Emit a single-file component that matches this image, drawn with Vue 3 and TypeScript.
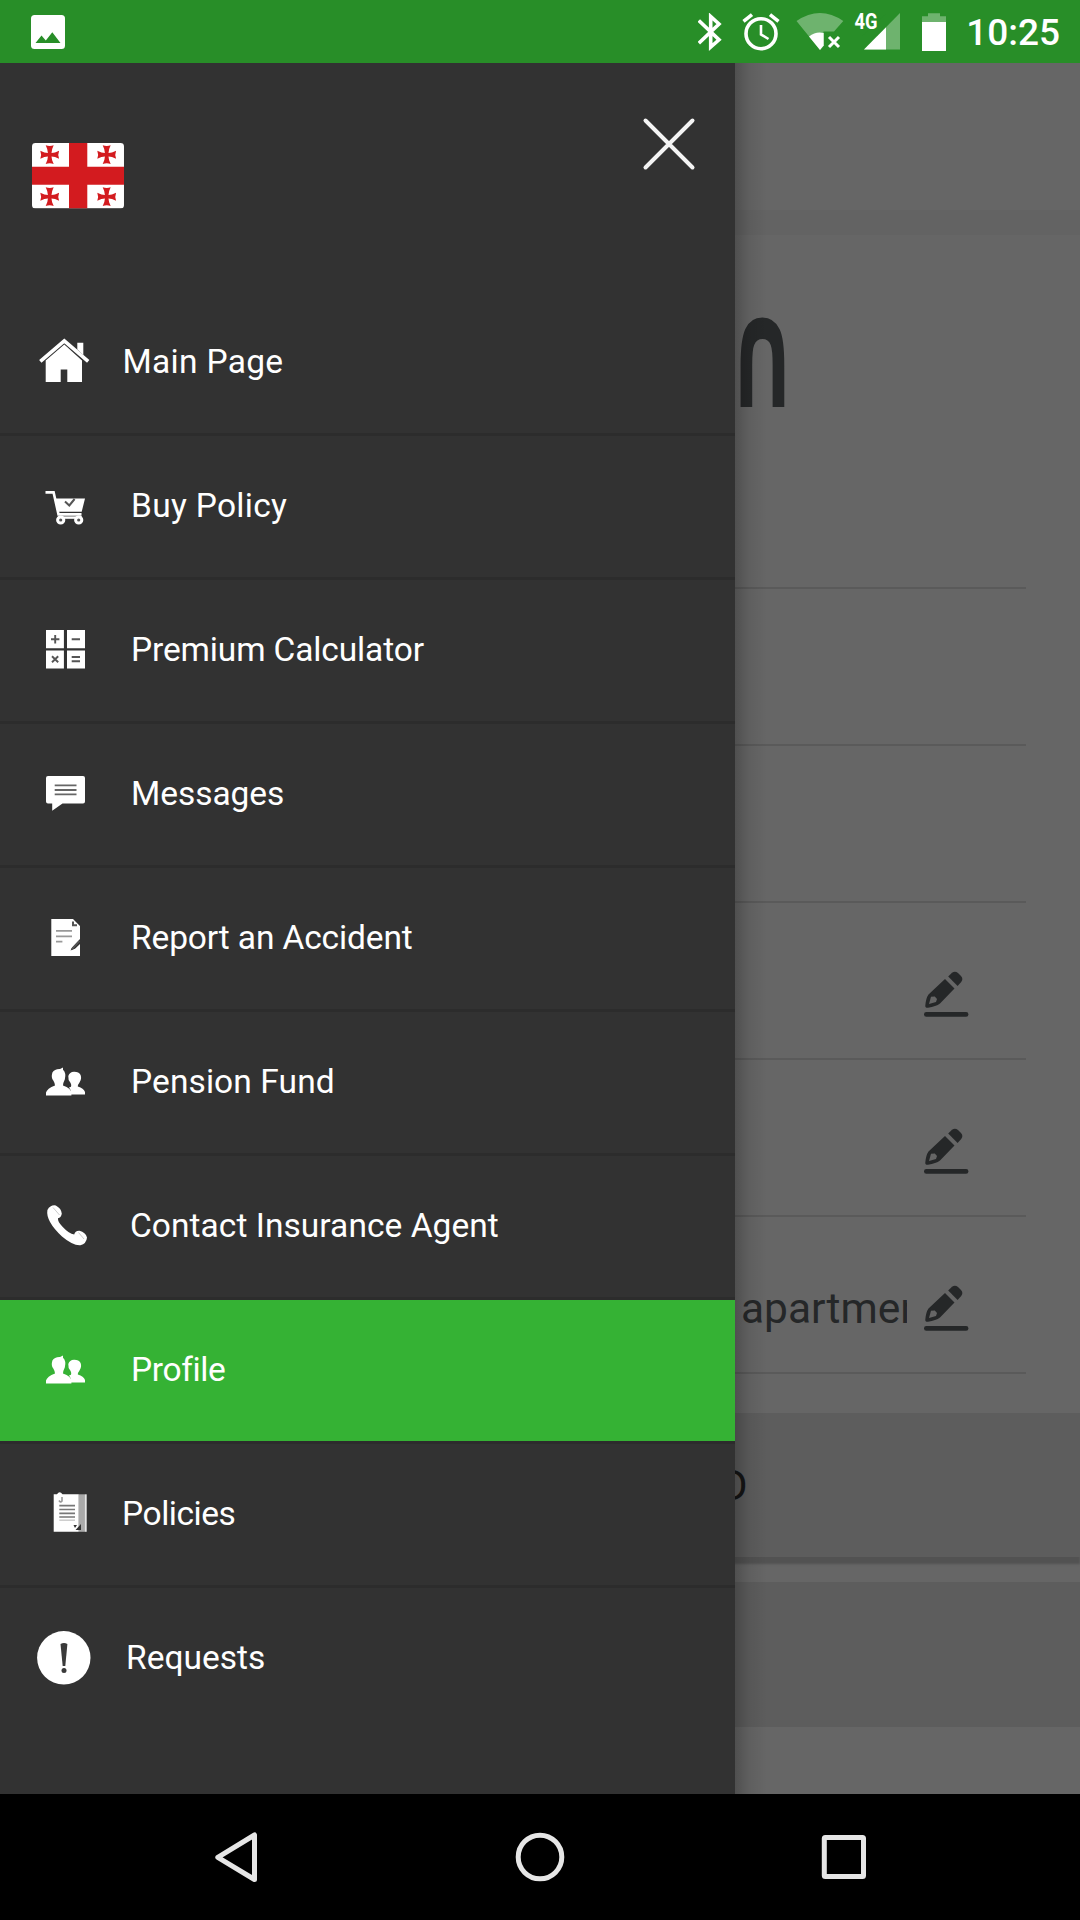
<script setup lang="ts">
type IconName = 'home' | 'cart' | 'calc' | 'message' | 'report' | 'people' | 'phone' | 'papers' | 'alert'

interface MenuItem {
  label: string
  icon: IconName
  indent: number
  spacing: number
  active?: boolean
}

const items: MenuItem[] = [
  { label: 'Main Page', icon: 'home', indent: 122.5, spacing: 0.3 },
  { label: 'Buy Policy', icon: 'cart', indent: 131, spacing: 0.3 },
  { label: 'Premium Calculator', icon: 'calc', indent: 131, spacing: -0.13 },
  { label: 'Messages', icon: 'message', indent: 131, spacing: -0.05 },
  { label: 'Report an Accident', icon: 'report', indent: 131, spacing: -0.13 },
  { label: 'Pension Fund', icon: 'people', indent: 131, spacing: 0.1 },
  { label: 'Contact Insurance Agent', icon: 'phone', indent: 130, spacing: 0.05 },
  { label: 'Profile', icon: 'people', indent: 131, spacing: -0.35, active: true },
  { label: 'Policies', icon: 'papers', indent: 122, spacing: -0.45 },
  { label: 'Requests', icon: 'alert', indent: 126, spacing: 0 },
]

const fields = [
  { value: '', editable: false },
  { value: '', editable: false },
  { value: '', editable: false },
  { value: '', editable: true },
  { value: '', editable: true },
  { value: 'apartment', editable: true },
]

const crosses = [
  [17.7, 11.7],
  [74.7, 11.7],
  [17.7, 53.7],
  [74.7, 53.7],
]
</script>

<template>
  <div class="screen">
    <header class="status">
      <svg class="pic" width="34" height="34" viewBox="0 0 34 34">
        <rect width="34" height="34" rx="3.5" fill="#fff" />
        <path d="M4.5 28 L10.5 20.5 L14.8 25.6 L21.3 17.3 L29.5 28 Z" fill="#288e28" />
      </svg>
      <div class="tray">
        <svg width="24" height="38" viewBox="698 13 24 38" fill="none" stroke="#fff" stroke-width="3.6">
          <path d="M698.8 20.5 L719 39.8 L710.7 47 V16.5 L719 24 L698.8 43.2" />
        </svg>
        <svg width="38" height="38" viewBox="742 13 38 38" fill="none" stroke="#fff">
          <circle cx="761" cy="33.7" r="15" stroke-width="3.6" />
          <path d="M761 25 V34.5 L768.5 39" stroke-width="2.6" />
          <path d="M743.5 21.3 L752 14.6 M770 14.6 L778.5 21.3" stroke-width="3.6" />
        </svg>
        <svg width="48" height="38" viewBox="796 13 48 38">
          <path d="M796.5 21 Q820 5 843.3 21 L834 31.5 H823.5 V46 L820 50 Z" fill="#6eb36e" />
          <path d="M809 36.5 Q816 31 823.7 33 V45.5 L820 50 Z" fill="#fff" />
          <path d="M829 37 L839 47 M839 37 L829 47" stroke="#fff" stroke-width="3" />
        </svg>
        <svg width="48" height="54" viewBox="854 5 48 54">
          <path d="M900 13 V49.5 H864 Z" fill="#6eb36e" />
          <path d="M886 14 L862 36 H886 Z" fill="#288e28" />
          <path d="M886 27.3 V49.5 H864 Z" fill="#fff" />
          <text x="854.6" y="29" class="net" textLength="23" lengthAdjust="spacingAndGlyphs">4G</text>
        </svg>
        <svg width="24" height="38" viewBox="922 12 24 38">
          <path d="M922 15.3 H928 V12.3 H940 V15.3 H946 V22 H922 Z" fill="#6eb36e" />
          <rect x="922" y="21" width="24" height="29" fill="#fff" />
        </svg>
        <span class="clock">10:25</span>
      </div>
    </header>

    <div class="body">
      <main class="page">
        <div class="toolbar"></div>
        <div class="strip"></div>
        <div class="title"><span>∩</span></div>
        <section class="fields">
          <div v-for="(f, i) in fields" :key="i" class="field">
            <span class="value">{{ f.value }}</span>
            <svg v-if="f.editable" class="pencil" width="46" height="48" viewBox="0 0 46 48">
              <path d="M24.2 5.5 L28 1.8 Q31-.6 34 2 L37 5 Q39.6 8 37.2 11 L33.6 15 Z" />
              <path d="M21 8 L30.5 17.5 L16 32.5 Q12 35.5 4 36.8 Q1 37 1.3 34.5 Q2 27 4.5 23.5 Z" />
              <path d="M7 25.8 L5 33 L12 31 L13 28 L10.8 25.5 Z" fill="#666" />
              <rect x="0" y="41" width="44.4" height="4.7" rx="2.3" />
            </svg>
          </div>
        </section>
        <div class="card raised"><span>D</span></div>
        <div class="card"></div>
      </main>

      <aside class="drawer">
        <div class="head">
          <svg class="flag" width="92" height="65.4" viewBox="0 0 92 65.4">
            <defs>
              <clipPath id="flagClip"><rect width="92" height="65.4" rx="3.5" /></clipPath>
            </defs>
            <g clip-path="url(#flagClip)">
              <rect width="92" height="65.4" fill="#fff" />
              <path d="M37 0 H55.3 V65.4 H37 Z M0 23.7 H92 V41.8 H0 Z" fill="#d31b1f" />
              <path
                v-for="(c, i) in crosses"
                :key="i"
                :transform="`translate(${c[0]} ${c[1]})`"
                d="M-4-9.4 Q0-7.8 4-9.4 Q1.8-5 1.8-1.8 Q5-1.8 9.4-4 Q7.8 0 9.4 4 Q5 1.8 1.8 1.8 Q1.8 5 4 9.4 Q0 7.8-4 9.4 Q-1.8 5-1.8 1.8 Q-5 1.8-9.4 4 Q-7.8 0-9.4-4 Q-5-1.8-1.8-1.8 Q-1.8-5-4-9.4 Z"
                fill="#d31b1f"
              />
            </g>
          </svg>
          <svg class="close" width="54" height="54" viewBox="0 0 54 54">
            <path d="M3.5 3.5 L50.5 50.5 M50.5 3.5 L3.5 50.5" stroke="#f4f4f4" stroke-width="4" stroke-linecap="round" />
          </svg>
        </div>

        <nav class="menu">
          <a v-for="item in items" :key="item.label" class="item" :class="{ active: item.active }">
            <svg class="icon" width="100" height="141" viewBox="0 0 100 141" fill="#fff">
              <g v-if="item.icon === 'home'">
                <path d="M77.3 50.8 H83.3 V63 L77.3 57.5 Z" />
                <path d="M40.3 69.3 L64.3 48.8 L88.2 69.3" fill="none" stroke="#fff" stroke-width="3.6" />
                <path d="M45.7 68.5 L64.3 52.5 L82 68.5 V90 H67.3 V77.4 H60.7 V90 H45.7 Z" />
              </g>
              <g v-else-if="item.icon === 'cart'">
                <path d="M45.5 56.4 H53.6 L58.5 78.4 H81.5" fill="none" stroke="#fff" stroke-width="2.6" />
                <path d="M55.5 62.4 H85 L81.7 75.8 H58.4 Z" />
                <path d="M65 65.5 L69.3 69.5 L74.6 63" fill="none" stroke="#555" stroke-width="2" />
                <path d="M58 81.6 H82" stroke="#fff" stroke-width="2.4" />
                <circle cx="60.7" cy="84" r="3.1" fill="#555" stroke="#fff" stroke-width="3" />
                <circle cx="78.7" cy="84" r="3.1" fill="#555" stroke="#fff" stroke-width="3" />
              </g>
              <g v-else-if="item.icon === 'calc'">
                <path d="M46 50 H63.9 V68.2 H46 Z M67 50 H85 V68.2 H67 Z M46 70.5 H63.9 V88.4 H46 Z M67 70.5 H85 V88.4 H67 Z" />
                <path d="M51 59.2 H59.4 M55.2 55 V63.4 M71.7 59.2 H80 M52 76.3 L58.2 82.2 M58.2 76.3 L52 82.2 M71.7 77 H80 M71.7 81.3 H80" stroke="#555" stroke-width="1.9" />
              </g>
              <g v-else-if="item.icon === 'message'">
                <path d="M48 52 H83 Q85 52 85 54 V77.4 Q85 79.4 83 79.4 H62.5 L52.2 86.8 V79.4 H48 Q46 79.4 46 77.4 V54 Q46 52 48 52 Z" />
                <path d="M54.7 61.4 H76.5 M54.7 66 H76.5 M54.7 70.4 H76.5" stroke="#666" stroke-width="1.9" />
              </g>
              <g v-else-if="item.icon === 'report'">
                <path d="M51.3 51 H73 L80 58 V71 L72 79.5 L70.5 82.5 L75 80.8 L80 76 V88 H51.3 Z" />
                <path d="M73 53.5 V57.3 H77" fill="none" stroke="#555" stroke-width="2" />
                <path d="M56 62.8 H72 M56 68.4 H72 M56 73.7 H62.4" stroke="#999" stroke-width="1.8" />
                <path d="M79.6 73 L71.6 81.5" stroke="#555" stroke-width="1.8" />
              </g>
              <g v-else-if="item.icon === 'people'">
                <path d="M46 83.4 V80.5 Q47 76.5 55 73.4 Q55.2 71.8 53.3 68.5 Q50.8 65.5 52.4 60.5 Q54.5 56.8 60 57 L63 55.6 L63 57.8 Q66.5 61 64.8 67.5 Q62.8 71.5 63 73.4 Q71.2 76.5 71.4 80.5 V83.4 Z" />
                <path d="M71 82.6 H85 V80 Q83.7 76.4 77.8 74.6 Q77.8 72.5 79.5 70.4 Q82 66.8 80.6 63 Q78.8 59.7 74 59.8 Q69.5 60 68.3 64 Q67.8 67.5 70.6 71 Q71.7 73 71 74.7 L69 75.4 Q71.4 78 71 82.6 Z" />
              </g>
              <g v-else-if="item.icon === 'phone'">
                <path d="M47.4 54 Q50.5 48.6 55.8 49.5 Q61.5 52.5 61.8 57.8 Q61 62 58 62.3 Q57.5 65.5 62.3 70.5 Q69 77.8 74.2 78.6 Q75 74.6 79.5 74.8 Q85.5 76.5 87 81.4 Q86.5 87.5 80.4 89.2 Q73 89.8 62 80.5 Q45.5 65 47.4 54 Z" />
                <path d="M53 51.5 L59.5 59 M78.5 76.5 L84 83" stroke="#ccc" stroke-width="1" />
              </g>
              <g v-else-if="item.icon === 'papers'">
                <path d="M53.7 50.3 H57 Q59.5 46 62.5 50.3 H78.8 V87.8 H53.7 Z" />
                <path d="M78.8 50.3 H84 V87.8 H78.8 Z" fill="#aaa" />
                <path d="M84.3 50.3 H86.7 V87.8 H84.3 Z" fill="#e5e5e5" />
                <path d="M59.3 61.7 H75 M59.3 65.5 H75 M59.3 69.3 H75 M59.3 73 H75" stroke="#777" stroke-width="1.7" />
                <path d="M59.3 76.2 H75" stroke="#ccc" stroke-width="1.5" />
                <path d="M62 53 V57 Q60.5 59 59 56.5" fill="none" stroke="#999" stroke-width="1.6" />
                <path d="M81 80 V86 H75.5 Z M73.5 81 H77 L75 84 Z" fill="#333" />
              </g>
              <g v-else>
                <circle cx="63.8" cy="69.8" r="26.7" />
                <path d="M60.5 56 Q64 54 67.4 56 L65.3 78 H62.7 Z" fill="#3a3a3a" />
                <circle cx="64" cy="82.4" r="2.5" fill="#3a3a3a" />
              </g>
            </svg>
            <span class="label" :style="{ marginLeft: item.indent - 100 + 'px', letterSpacing: item.spacing + 'px' }">{{ item.label }}</span>
          </a>
        </nav>
      </aside>
    </div>

    <footer class="navbar">
      <svg width="50" height="56" viewBox="211 1829 50 56">
        <path d="M254.5 1835 V1879.5 L217.8 1857.3 Z" />
      </svg>
      <svg width="50" height="56" viewBox="515 1829 50 56">
        <circle cx="540" cy="1857" r="21.8" />
      </svg>
      <svg width="50" height="56" viewBox="819 1829 50 56">
        <rect x="824.3" y="1837.5" width="39.2" height="39" rx="1" />
      </svg>
    </footer>
  </div>
</template>

<style>
body {
  margin: 0;
  background: #000;
}
</style>

<style scoped>
.screen {
  width: 1080px;
  height: 1920px;
  display: flex;
  flex-direction: column;
  overflow: hidden;
  font-family: Roboto, "Liberation Sans", sans-serif;
}
svg {
  display: block;
  flex: none;
}
.status {
  height: 63px;
  flex: none;
  background: #288e28;
  display: flex;
  align-items: center;
  justify-content: space-between;
  box-sizing: border-box;
  padding: 0 20px 0 30.5px;
}
.tray {
  display: flex;
  align-items: center;
}
.tray svg {
  margin-right: 20px;
}
.tray svg:nth-child(3) {
  margin-left: -4px;
  margin-right: 10px;
}
.net {
  font: 700 22px Roboto, sans-serif;
  fill: #fff;
}
.clock {
  color: #fff;
  font-size: 37px;
  font-weight: 500;
  line-height: 61px;
  padding-top: 2px;
}
.body {
  position: relative;
  height: 1731px;
  flex: none;
}
.page {
  height: 100%;
  background: #666;
  display: flex;
  flex-direction: column;
}
.toolbar {
  height: 147px;
}
.strip {
  height: 25px;
  background: #636363;
}
.title {
  height: 197px;
  display: flex;
  padding-left: 730px;
  color: #252728;
}
.title span {
  font: 700 80px/197px "DejaVu Sans", sans-serif;
  transform: translateY(20px) scale(1.07, 1.93);
}
.fields {
  margin: 0 54px;
}
.field {
  height: 157px;
  box-sizing: border-box;
  border-bottom: 2px solid #5a5a5a;
  display: flex;
  align-items: center;
  padding: 28px 0 0 687px;
}
.value {
  width: 166px;
  overflow: hidden;
  white-space: nowrap;
  font-size: 42.5px;
  line-height: 60px;
  color: #252728;
}
.pencil {
  margin-left: 17px;
  fill: #252728;
}
.card {
  height: 145px;
  background: #5d5d5d;
  flex: none;
}
.raised {
  height: 144px;
  margin: 39px 0 25px;
  box-shadow: 0 7px 2px #525252;
  display: flex;
  align-items: center;
  padding-left: 720px;
  color: #151515;
  font-size: 42px;
}
.drawer {
  position: absolute;
  left: 0;
  top: 0;
  width: 735px;
  height: 100%;
  background: #323232;
  display: flex;
  flex-direction: column;
}
.drawer::after {
  content: "";
  position: absolute;
  left: 735px;
  top: 0;
  width: 32px;
  height: 100%;
  background: linear-gradient(to right, rgba(0, 0, 0, 0.22), rgba(0, 0, 0, 0.07) 45%, transparent);
}
.head {
  height: 229px;
  flex: none;
  box-sizing: border-box;
  padding: 54px 39px 0 32px;
  display: flex;
  justify-content: space-between;
}
.flag {
  margin-top: 26.3px;
}
.item {
  height: 141px;
  border-bottom: 3px solid #2c2c2c;
  display: flex;
  align-items: center;
  color: #fff;
}
.item:last-child {
  border-bottom: 0;
}
.item.active {
  background: #35b234;
  background-clip: padding-box;
}
.label {
  font-size: 33.5px;
  line-height: 40px;
  white-space: nowrap;
  padding-bottom: 2px;
}
.navbar {
  height: 126px;
  background: #000;
  display: flex;
  align-items: center;
  justify-content: space-between;
  padding: 0 211px;
}
.navbar svg {
  fill: none;
  stroke: #e6e6e6;
  stroke-width: 5;
  stroke-linejoin: round;
}
</style>
